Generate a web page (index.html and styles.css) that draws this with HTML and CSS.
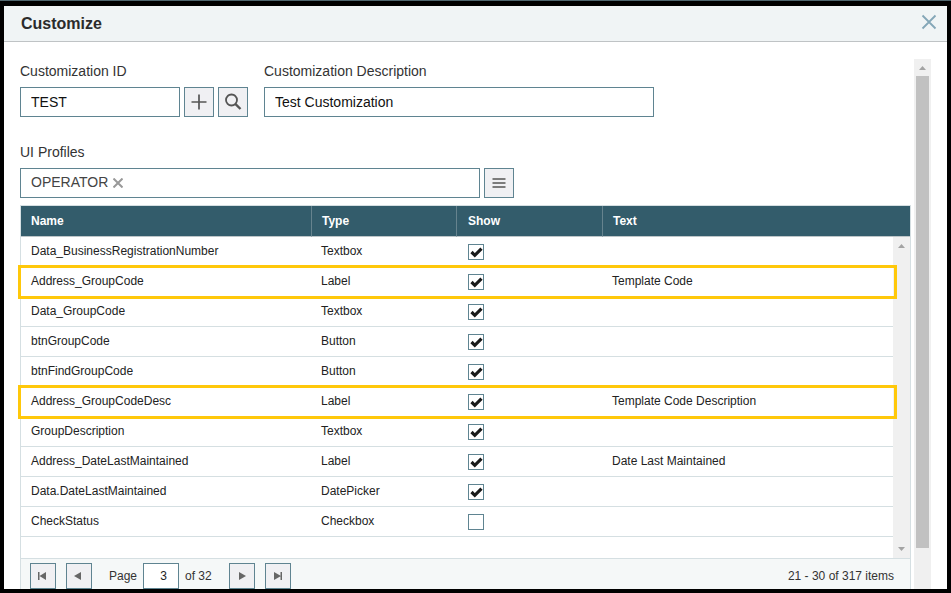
FILE: index.html
```html
<!DOCTYPE html>
<html lang="en">
<head>
  <meta charset="utf-8">
  <title>Customize</title>
  <link rel="stylesheet" href="styles.css">
</head>
<body>
  <div class="dialog">
    <div class="dialog-header">
      <h2>Customize</h2>
      <button class="close" aria-label="Close">
        <svg width="16" height="16" viewBox="0 0 16 16"><path d="M1.5 1.5l13 13M14.5 1.5l-13 13" stroke="#84a7b7" stroke-width="1.8" fill="none"/></svg>
      </button>
    </div>

    <div class="dialog-body">
      <div class="content">
        <div class="form-row">
          <div class="field">
            <label for="customId">Customization ID</label>
            <div class="controls">
              <input type="text" id="customId" class="input id-input" value="TEST">
              <button class="icon-btn" aria-label="Add">
                <svg width="16" height="16" viewBox="0 0 16 16"><path d="M8 .5v15M.5 8h15" stroke="#555" stroke-width="1.7" fill="none"/></svg>
              </button>
              <button class="icon-btn" aria-label="Find">
                <svg width="18" height="18" viewBox="0 0 18 18"><circle cx="7.5" cy="7" r="5.5" stroke="#555" stroke-width="1.8" fill="none"/><path d="M11.3 10.8l5.2 5.2" stroke="#555" stroke-width="2.4" fill="none"/></svg>
              </button>
            </div>
          </div>
          <div class="field">
            <label for="customDesc">Customization Description</label>
            <div class="controls">
              <input type="text" id="customDesc" class="input desc-input" value="Test Customization">
            </div>
          </div>
        </div>

        <div class="field profiles">
          <label for="profiles">UI Profiles</label>
          <div class="controls">
            <div class="multiselect">
              <span class="tag">OPERATOR</span>
              <button class="tag-remove" aria-label="Remove OPERATOR">
                <svg width="10" height="10" viewBox="0 0 10 10"><path d="M.5 .5l9 9M9.500 .5l-9 9" stroke="#999" stroke-width="2" fill="none"/></svg>
              </button>
              <input type="text" id="profiles">
            </div>
            <button class="icon-btn" aria-label="List profiles">
              <svg width="14" height="12" viewBox="0 0 14 12"><path d="M.5 2h13M.5 6h13M.5 10h13" stroke="#555" stroke-width="1.6" fill="none"/></svg>
            </button>
          </div>
        </div>

        <div class="grid">
          <table class="grid-header">
            <colgroup><col class="col-name"><col class="col-type"><col class="col-show"><col></colgroup>
            <thead>
              <tr><th>Name</th><th>Type</th><th>Show</th><th>Text</th></tr>
            </thead>
          </table>
          <div class="grid-body">
            <table>
              <colgroup><col class="col-name"><col class="col-type"><col class="col-show"><col></colgroup>
              <tbody>
                <tr><td>Data_BusinessRegistrationNumber</td><td>Textbox</td><td><input type="checkbox" aria-label="Show Data_BusinessRegistrationNumber" checked></td><td></td></tr>
                <tr class="highlight"><td>Address_GroupCode</td><td>Label</td><td><input type="checkbox" aria-label="Show Address_GroupCode" checked></td><td>Template Code</td></tr>
                <tr><td>Data_GroupCode</td><td>Textbox</td><td><input type="checkbox" aria-label="Show Data_GroupCode" checked></td><td></td></tr>
                <tr><td>btnGroupCode</td><td>Button</td><td><input type="checkbox" aria-label="Show btnGroupCode" checked></td><td></td></tr>
                <tr><td>btnFindGroupCode</td><td>Button</td><td><input type="checkbox" aria-label="Show btnFindGroupCode" checked></td><td></td></tr>
                <tr class="highlight"><td>Address_GroupCodeDesc</td><td>Label</td><td><input type="checkbox" aria-label="Show Address_GroupCodeDesc" checked></td><td>Template Code Description</td></tr>
                <tr><td>GroupDescription</td><td>Textbox</td><td><input type="checkbox" aria-label="Show GroupDescription" checked></td><td></td></tr>
                <tr><td>Address_DateLastMaintained</td><td>Label</td><td><input type="checkbox" aria-label="Show Address_DateLastMaintained" checked></td><td>Date Last Maintained</td></tr>
                <tr><td>Data.DateLastMaintained</td><td>DatePicker</td><td><input type="checkbox" aria-label="Show Data.DateLastMaintained" checked></td><td></td></tr>
                <tr><td>CheckStatus</td><td>Checkbox</td><td><input type="checkbox" aria-label="Show CheckStatus"></td><td></td></tr>
              </tbody>
            </table>
            <div class="scrollbar">
              <svg width="17" height="17" viewBox="0 0 17 17"><path d="M5 11l3.5-4 3.5 4z" fill="#a3a3a3"/></svg>
              <svg width="17" height="17" viewBox="0 0 17 17"><path d="M5 6l3.5 4L12 6z" fill="#a3a3a3"/></svg>
            </div>
          </div>
          <div class="pager">
            <button class="page-btn" aria-label="First page">
              <svg width="10" height="8" viewBox="0 0 10 8"><path d="M0 0h1.500v8H0zM8 0v8L1.500 4z" fill="#666"/></svg>
            </button>
            <button class="page-btn" aria-label="Previous page">
              <svg width="10" height="8" viewBox="0 0 10 8"><path d="M7 0v8L0 4z" fill="#666"/></svg>
            </button>
            <div class="page-pick">
              <label for="page">Page</label>
              <input type="text" id="page" value="3">
              <span>of 32</span>
            </div>
            <button class="page-btn" aria-label="Next page">
              <svg width="10" height="8" viewBox="0 0 10 8"><path d="M2 0v8l7-4z" fill="#666"/></svg>
            </button>
            <button class="page-btn" aria-label="Last page">
              <svg width="10" height="8" viewBox="0 0 10 8"><path d="M1 0v8l7-4zM7.500 0H9v8H7.500z" fill="#666"/></svg>
            </button>
            <span class="page-info">21 - 30 of 317 items</span>
          </div>
        </div>
      </div>

      <div class="scrollbar">
        <svg width="17" height="17" viewBox="0 0 17 17"><path d="M5 11l3.5-4 3.5 4z" fill="#a3a3a3"/></svg>
        <div class="thumb"></div>
      </div>
    </div>
  </div>
</body>
</html>
```
FILE: styles.css
```css
* {
  box-sizing: border-box;
}

body {
  margin: 0;
  height: 100vh;
  overflow: hidden;
  background: #000;
  border-top: 1px solid #50666e;
  font-family: "Liberation Sans", Arial, sans-serif;
  font-size: 14px;
  color: #333;
}

input,
button {
  font-family: inherit;
  font-size: inherit;
  margin: 0;
  padding: 0;
}

button {
  display: flex;
  align-items: center;
  justify-content: center;
  cursor: pointer;
}

.dialog {
  height: 100%;
  display: flex;
  flex-direction: column;
  border: solid #000;
  border-width: 5px 4px 4px;
  background: #fff;
}

.dialog-header {
  flex: none;
  display: flex;
  align-items: center;
  justify-content: space-between;
  height: 36px;
  padding: 0 8px 3px 17px;
  background: #f0f4f5;
  border-bottom: 1px solid #bfc3c5;
}

.dialog-header h2 {
  margin: 3px 0 0;
  font-size: 16px;
  color: #2b2b2b;
}

.close {
  width: 20px;
  height: 20px;
  border: none;
  background: none;
}

.dialog-body {
  flex: 1;
  min-height: 0;
  display: flex;
  gap: 3px;
  padding: 17px 16px 0;
  overflow: hidden;
}

.content {
  flex: 1;
  min-width: 0;
}

/* form */
.form-row {
  display: flex;
  gap: 16px;
}

.field label {
  display: block;
  line-height: 24px;
  margin-bottom: 4px;
}

.controls {
  display: flex;
  gap: 4px;
}

.input,
.multiselect {
  height: 30px;
  padding: 0 10px;
  border: 1px solid #5f8491;
  background: #fff;
  color: #111;
}

.id-input {
  width: 160px;
}

.desc-input {
  width: 390px;
}

.icon-btn {
  width: 30px;
  height: 30px;
  border: 1px solid #5f8491;
  background: #f0f0f3;
}

.profiles {
  margin: 23px 0 7px;
}

.multiselect {
  display: flex;
  align-items: center;
  gap: 5px;
  width: 460px;
  color: #444;
}

.tag {
  padding-bottom: 2px;
}

.multiselect input {
  flex: 1;
  min-width: 0;
  border: none;
  outline: none;
}

.tag-remove {
  border: none;
  background: none;
}

/* grid */
.grid {
  border: 1px solid #d5dfe2;
  font-size: 12px;
}

.grid table {
  width: 100%;
  table-layout: fixed;
  border-collapse: separate;
  border-spacing: 0;
}

.col-name {
  width: 290px;
}

.col-type {
  width: 145px;
}

.col-show {
  width: 146px;
}

.grid th {
  height: 31px;
  padding: 0 10px;
  text-align: left;
  color: #fff;
  background: #335c6b;
  border-bottom: 1px solid #bdc5c8;
}

.grid th + th {
  border-left: 1px solid #66838e;
}

.grid th:nth-child(3) {
  padding-left: 11px;
}

.grid-body {
  display: flex;
  align-items: flex-start;
  min-height: 321px;
}

.grid-body table {
  flex: 1;
}

.grid td {
  height: 30px;
  padding: 0 10px 2px;
  border-bottom: 1px solid #d5dfe2;
  color: #222;
}

.grid td:nth-child(3) {
  padding: 1px 12px 0;
}

.highlight {
  position: relative;
}

/* lives in the first cell, spans the whole row */
.highlight td:first-child::after {
  content: '';
  position: absolute;
  inset: -2px -4px -2px -3px;
  border: 3px solid #ffc80a;
  pointer-events: none;
}

input[type="checkbox"] {
  display: block;
  appearance: none;
  width: 16px;
  height: 16px;
  border: 1px solid #5f8491;
  background: #fff;
}

input[type="checkbox"]:checked {
  background: #fff url("data:image/svg+xml,%3Csvg xmlns='http://www.w3.org/2000/svg' viewBox='0 0 14 14'%3E%3Cpath d='M2.500 7l3.300 3.300L12.500 3.600' fill='none' stroke='%231a1a1a' stroke-width='3.200'/%3E%3C/svg%3E") center / 14px no-repeat;
}

/* scrollbars */
.scrollbar {
  flex: none;
  width: 17px;
  align-self: stretch;
  display: flex;
  flex-direction: column;
  background: #f0f0f0;
}

.grid-body .scrollbar {
  justify-content: space-between;
}

.scrollbar svg {
  flex: none;
}

.thumb {
  height: 89%;
  margin: 0 2px;
  background: #c1c1c1;
}

/* pager */
.pager {
  display: flex;
  align-items: center;
  gap: 10px;
  height: 34px;
  padding: 0 16px 0 9px;
  border-top: 1px solid #d5dfe2;
  background: #f5f8f8;
}

.page-btn {
  width: 26px;
  height: 26px;
  border: 1px solid #5f8491;
  background: #f0f0f3;
}

.page-pick {
  display: flex;
  align-items: center;
  gap: 6px;
  margin: 0 7px;
}

.page-pick input {
  width: 36px;
  height: 26px;
  padding-right: 11px;
  border: 1px solid #5f8491;
  text-align: right;
  color: #222;
}

.page-info {
  margin-left: auto;
}
```
